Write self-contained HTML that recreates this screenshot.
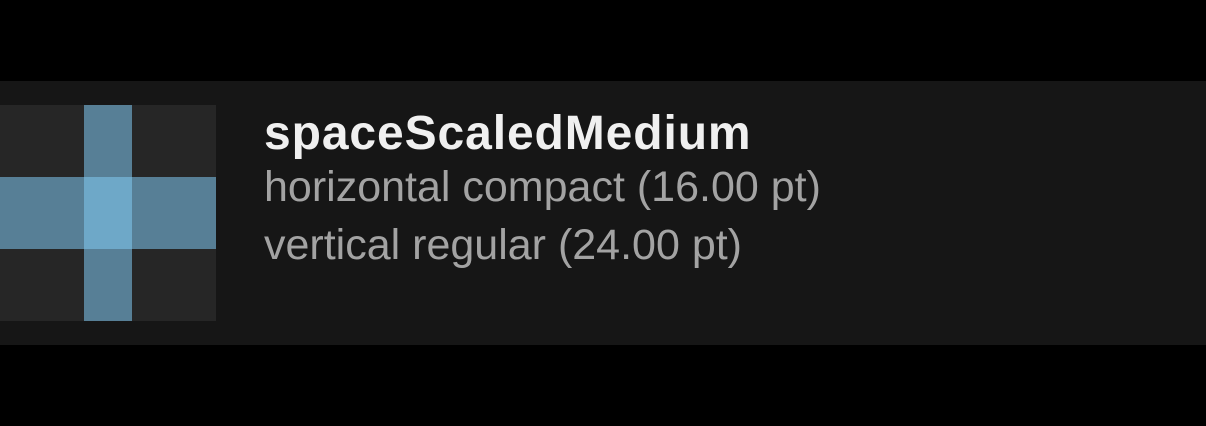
<!DOCTYPE html>
<html><head><style>
html,body{margin:0;padding:0;background:#000;width:1206px;height:426px;overflow:hidden;font-family:"Liberation Sans",Arial,sans-serif}
.band{position:absolute;left:0;top:81px;width:1206px;height:264px;background:#161616}
.sq{position:absolute;left:0;top:105px;width:216px;height:216px;background:#262626}
.v{position:absolute;left:84px;top:105px;width:48px;height:216px;background:#577f96}
.h{position:absolute;left:0;top:177px;width:216px;height:72px;background:#577f96}
.c{position:absolute;left:84px;top:177px;width:48px;height:72px;background:#6ea8c8}
.t{position:absolute;left:264px;white-space:nowrap}
.t1{top:108px;font-size:48px;font-weight:bold;color:#f0f0f0;letter-spacing:0.9px;line-height:52px}
.t2{top:164px;font-size:43px;color:#a3a3a3;line-height:46px}
.t3{top:222px;font-size:43px;color:#a3a3a3;line-height:46px}
</style></head><body>
<div class="band"></div>
<div class="sq"></div><div class="v"></div><div class="h"></div><div class="c"></div>
<div class="t t1">spaceScaledMedium</div>
<div class="t t2">horizontal compact (16.00 pt)</div>
<div class="t t3">vertical regular (24.00 pt)</div>
</body></html>
